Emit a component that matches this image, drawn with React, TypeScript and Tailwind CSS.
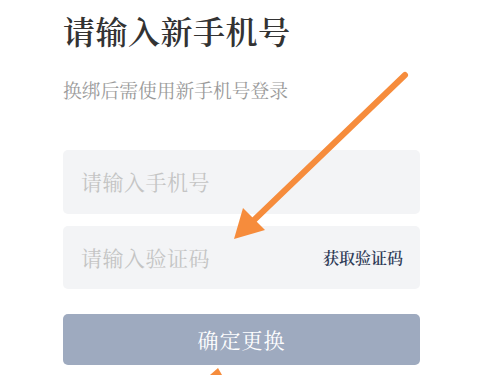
export default function App() {
  return (
    <div
      className="relative w-[500px] h-[375px] overflow-hidden bg-white"
      style={{ fontFamily: '"Noto Serif CJK SC", "Noto Sans CJK SC", sans-serif' }}
    >
      <div className="flex flex-col pl-[63px] pr-[80px] pt-[10px]">
        <h1 className="text-[32px] leading-[40px] font-semibold text-[#333333] tracking-[0.5px]">
          请输入新手机号
        </h1>
        <p className="mt-[26px] text-[18.75px] leading-[28px] text-[#9a9a9a]">
          换绑后需使用新手机号登录
        </p>

        <div className="mt-[46px] flex h-[64px] items-center rounded-[5px] bg-[#f3f4f6] px-[18px]">
          <span className="text-[21px] text-[#c4c4c4] tracking-[0.5px]">请输入手机号</span>
        </div>

        <div className="mt-[12px] flex h-[63px] items-center justify-between rounded-[5px] bg-[#f3f4f6] pl-[18px] pr-[17px]">
          <span className="text-[21px] text-[#c4c4c4] tracking-[0.5px]">请输入验证码</span>
          <span className="text-[16px] font-semibold text-[#2f3b57]">获取验证码</span>
        </div>

        <button className="mt-[25px] flex h-[51px] items-center justify-center rounded-[5px] bg-[#9eaabf] text-[21px] text-white tracking-[1px]">
          确定更换
        </button>
      </div>

      <svg
        className="absolute inset-0 pointer-events-none"
        width="500"
        height="375"
        viewBox="0 0 500 375"
      >
        <line x1="405" y1="75" x2="252" y2="222" stroke="#f68c3c" strokeWidth="6" strokeLinecap="round" />
        <polygon points="234,239 243,208 265,230" fill="#f68c3c" />
        <path d="M210 375 L218 368 L222 375 Z" fill="#f68c3c" />
      </svg>
    </div>
  );
}
